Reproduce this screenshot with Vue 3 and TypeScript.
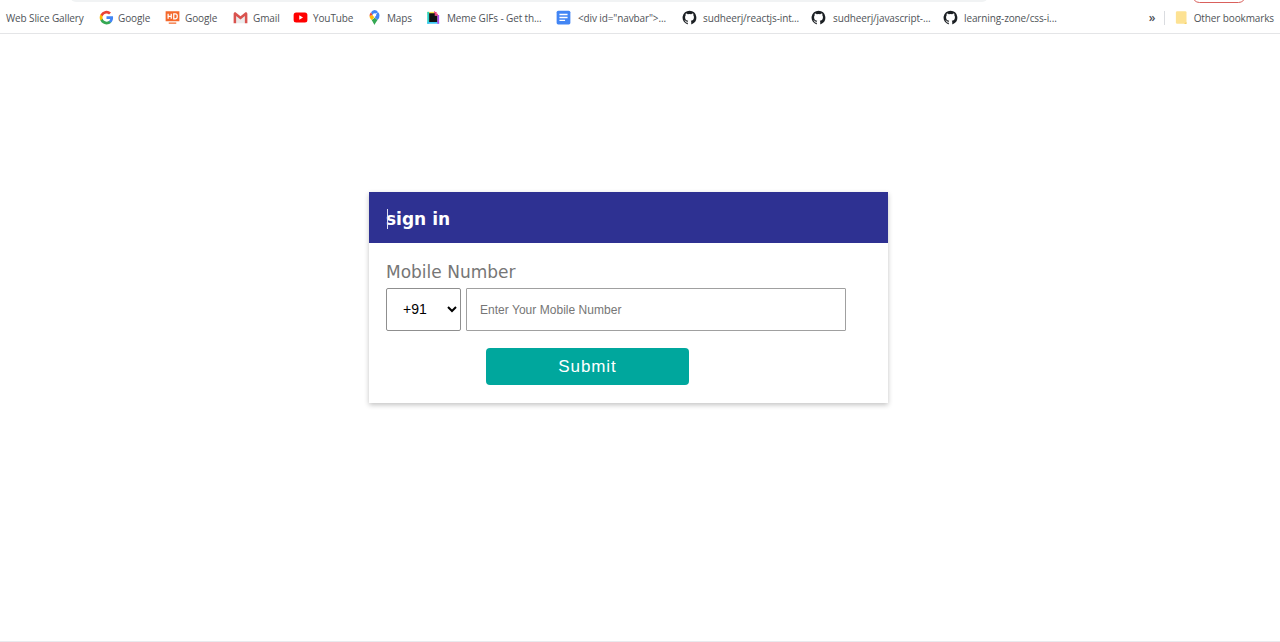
<template>
  <div class="page">
    <div class="top-strip">
      <div class="omnibox"></div>
      <div class="profile-pill"></div>
    </div>
    <nav class="bookmarks">
      <div class="bookmark-list">
        <a
          v-for="item in bookmarks"
          :key="item.label + item.width"
          class="bookmark"
          :style="{ width: item.width + 'px', gap: item.gap + 'px' }"
        >
          <svg v-if="item.icon" class="bm-icon" viewBox="0 0 24 24">
            <template v-if="item.icon === 'google'">
              <path fill="#4285f4" d="M22.5 12.2c0-.8-.1-1.500-.2-2.200H12v4.200h5.900a5 5 0 0 1-2.200 3.300v2.700h3.500c2.100-1.900 3.300-4.700 3.300-8z" />
              <path fill="#34a853" d="M12 23c3 0 5.400-1 7.200-2.700l-3.500-2.700c-1 .7-2.200 1-3.700 1-2.800 0-5.200-1.900-6.100-4.500H2.300v2.800A11 11 0 0 0 12 23z" />
              <path fill="#fbbc05" d="M5.900 14.100a6.600 6.600 0 0 1 0-4.200V7.100H2.300a11 11 0 0 0 0 9.800z" />
              <path fill="#ea4335" d="M12 5.400c1.600 0 3 .5 4.100 1.600l3.100-3.100A11 11 0 0 0 2.300 7.100l3.600 2.800C6.800 7.300 9.200 5.400 12 5.400z" />
            </template>
            <template v-else-if="item.icon === 'hd'">
              <path fill="#f4692c" d="M1 2h22v16H1zM6 20h12v2H6z" />
              <path fill="none" stroke="#fff" stroke-width="2" d="M5 6v8M5 10h5M10 6v8M14 6v8h2.500a3 3 0 0 0 3-3V9a3 3 0 0 0-3-3z" />
            </template>
            <template v-else-if="item.icon === 'gmail'">
              <path fill="#ececec" d="M4 5l8 7 8-7v16H4z" />
              <path fill="#d9534f" d="M1 6.500C1 4 3.500 3 5 4.500l7 5.500 7-5.500C20.500 3 23 4 23 6.500V21h-4V9.500l-7 5.500-7-5.500V21H1z" />
            </template>
            <template v-else-if="item.icon === 'youtube'">
              <rect x="1" y="4" width="22" height="16" rx="4" fill="#f00" />
              <path fill="#fff" d="M10 8.500v7l6-3.500z" />
            </template>
            <template v-else-if="item.icon === 'maps'">
              <path fill="#34a853" d="M7.500 16l4.500 8c1-3 3.200-5 4.800-8l-4.300-3.500z" />
              <path fill="#fbbc05" d="M4 9.500c0 2.800 1.800 4.600 3.500 6.500l4.500-5-3-3z" />
              <path fill="#ea4335" d="M6.500 3.500A8 8 0 0 0 4 9.500l5-1.500z" />
              <path fill="#4285f4" d="M12 0a8 8 0 0 0-5.500 3.500L9 8l7.500-3.500 1-1.500A8 8 0 0 0 12 0z" />
              <path fill="#4285f4" d="M20 8.500a8.500 8.500 0 0 1-3.200 7.500L12 11l4.500-6.500 1-1.500A8 8 0 0 1 20 8.500z" />
              <circle cx="12" cy="8" r="2.800" fill="#fff" />
            </template>
            <template v-else-if="item.icon === 'meme'">
              <path fill="#f7e24b" d="M2 3h11v4H2z" />
              <path fill="#2bd4c8" d="M2 3h3v19H2z" />
              <path fill="#3cc8f4" d="M2 19h19v3H2z" />
              <path fill="#b44cf0" d="M18 8h3v14h-3z" />
              <path fill="#f0437c" d="M13 1l2 2h2v3h2v3h-6z" />
              <path fill="#111" d="M5 5h9v4h4v10H5z" />
            </template>
            <template v-else-if="item.icon === 'docs'">
              <rect x="1" y="1" width="22" height="22" rx="2.500" fill="#4285f4" />
              <path fill="#fff" d="M5.500 6h13v2.200h-13zM5.500 10.800h13V13h-13zM5.500 15.500h9v2.200h-9z" />
            </template>
            <path
              v-else-if="item.icon === 'github'"
              fill="#1b1f23"
              d="M12 1A11.200 11.200 0 0 0 8.500 22.800c.6.100.8-.2.800-.5v-2.100c-3.100.7-3.800-1.300-3.800-1.300-.5-1.300-1.200-1.700-1.200-1.700-1-.7.100-.7.100-.7 1.100.1 1.700 1.200 1.700 1.200 1 1.700 2.600 1.200 3.200.9.100-.7.400-1.200.7-1.500-2.500-.3-5.100-1.200-5.100-5.500 0-1.200.4-2.200 1.100-3-.1-.3-.5-1.400.1-3 0 0 .9-.3 3.100 1.100a10.600 10.600 0 0 1 5.600 0c2.100-1.400 3.100-1.100 3.100-1.100.6 1.600.2 2.700.1 3 .7.800 1.100 1.800 1.100 3 0 4.300-2.600 5.200-5.100 5.500.4.400.8 1 .8 2.100v3c0 .3.200.6.800.5A11.200 11.200 0 0 0 12 1z"
            />
          </svg>
          <span class="bm-text">{{ item.label }}</span>
        </a>
      </div>
      <div class="bookmark-end">
        <span class="chevrons">»</span>
        <span class="divider"></span>
        <svg class="bm-icon folder" viewBox="0 0 24 24">
          <path fill="#fde293" d="M3 4a2 2 0 0 1 2-2h13a2 2 0 0 1 2 2v18H5a2 2 0 0 1-2-2z" />
          <path fill="#f2c94f" d="M16 22l4-2.500V22z" />
        </svg>
        <span class="bm-text">Other bookmarks</span>
      </div>
    </nav>

    <main class="content">
      <section class="card">
        <header class="card-head">
          <span class="caret"></span>
          <h1 class="card-title">sign in</h1>
        </header>
        <form class="card-body" @submit.prevent>
          <label class="field-label" for="mobile">Mobile Number</label>
          <div class="field-row">
            <select class="code-select">
              <option>+91</option>
            </select>
            <input id="mobile" class="mobile-input" type="text" placeholder="Enter Your Mobile Number" />
          </div>
          <button class="submit-btn" type="submit">Submit</button>
        </form>
      </section>
    </main>
  </div>
</template>

<script setup lang="ts">
interface Bookmark {
  label: string;
  icon: string;
  width: number;
  gap: number;
}

const bookmarks: Bookmark[] = [
  { label: 'Web Slice Gallery', icon: '', width: 93, gap: 0 },
  { label: 'Google', icon: 'google', width: 66, gap: 4 },
  { label: 'Google', icon: 'hd', width: 68, gap: 5 },
  { label: 'Gmail', icon: 'gmail', width: 60, gap: 5 },
  { label: 'YouTube', icon: 'youtube', width: 74, gap: 5 },
  { label: 'Maps', icon: 'maps', width: 59, gap: 5 },
  { label: 'Meme GIFs - Get th...', icon: 'meme', width: 130, gap: 6 },
  { label: '<div id="navbar">...', icon: 'docs', width: 126, gap: 7 },
  { label: 'sudheerj/reactjs-int...', icon: 'github', width: 129, gap: 6 },
  { label: 'sudheerj/javascript-...', icon: 'github', width: 132, gap: 7 },
  { label: 'learning-zone/css-i...', icon: 'github', width: 125, gap: 6 },
];
</script>

<style>
html,
body {
  margin: 0;
  background: #fff;
}
</style>

<style scoped>
.page {
  position: relative;
  height: 642px;
  overflow: hidden;
  box-sizing: border-box;
  background: #fff;
  border-bottom: 1px solid #e9eaee;
}

.top-strip {
  position: absolute;
  inset: 0 0 auto;
  height: 3px;
}

.omnibox {
  position: absolute;
  left: 70px;
  top: -10px;
  width: 918px;
  height: 12px;
  border-radius: 8px;
  background: #f1f3f4;
}

.profile-pill {
  position: absolute;
  left: 1192px;
  top: -12px;
  width: 52px;
  height: 13px;
  border: 1px solid #d9605c;
  border-radius: 8px;
}

.bookmarks {
  display: flex;
  justify-content: space-between;
  align-items: center;
  box-sizing: border-box;
  height: 34px;
  padding: 2px 6px 0;
  border-bottom: 1px solid #e4e5e7;
  font-family: "Open Sans", "Noto Sans", sans-serif;
  font-size: 10px;
  letter-spacing: -0.12px;
  color: #4f5358;
}

.bookmark-list,
.bookmark-end {
  display: flex;
  align-items: center;
}

.bookmark {
  display: flex;
  align-items: center;
  white-space: nowrap;
}

.bm-icon {
  flex: none;
  width: 15px;
  height: 15px;
}

.chevrons {
  width: 15px;
  font-size: 12px;
  font-weight: 600;
}

.divider {
  width: 1px;
  height: 14px;
  margin-right: 9px;
  background: #dadce0;
}

.folder {
  margin-right: 5px;
}

.content {
  padding: 158px 0 0 369px;
}

.card {
  width: 519px;
  background: #fff;
  box-shadow: 0 2px 5px rgba(0, 0, 0, 0.24);
}

.card-head {
  position: relative;
  display: flex;
  align-items: center;
  height: 51px;
  padding: 3px 0 0 17px;
  box-sizing: border-box;
  background: #2e3192;
}

.card-title {
  margin: 0;
  color: #fff;
  font-family: "DejaVu Sans", Verdana, sans-serif;
  font-size: 17px;
  font-weight: 700;
}

.caret {
  position: absolute;
  left: 18px;
  top: 17px;
  width: 1px;
  height: 20px;
  background: #dfe0f2;
}

.card-body {
  display: flex;
  flex-direction: column;
  padding: 18px 17px 18px;
}

.field-label {
  color: #767676;
  font-family: "DejaVu Sans", Verdana, sans-serif;
  font-size: 17px;
  line-height: 22px;
}

.field-row {
  display: flex;
  align-items: flex-end;
  gap: 5px;
  margin-top: 5px;
}

.code-select {
  box-sizing: border-box;
  width: 75px;
  height: 43px;
  padding: 0 0 2px 12px;
  border: 1px solid #8f8f8f;
  border-radius: 2px;
  background: #fff;
  color: #000;
  font-family: "Liberation Sans", Arial, sans-serif;
  font-size: 14px;
}

.mobile-input {
  box-sizing: border-box;
  width: 380px;
  height: 43px;
  padding: 0 13px;
  border: 1px solid #a0a0a0;
  border-radius: 1px;
  outline: none;
  font-family: "Liberation Sans", Arial, sans-serif;
  font-size: 12px;
  letter-spacing: 0.03px;
}

.mobile-input::placeholder {
  color: #767676;
  opacity: 1;
}

.submit-btn {
  align-self: flex-start;
  width: 203px;
  height: 37px;
  margin: 17px 0 0 100px;
  border: none;
  border-radius: 4px;
  background: #00a79d;
  color: #fff;
  font-family: "Liberation Sans", Arial, sans-serif;
  font-size: 17px;
  letter-spacing: 0.9px;
}
</style>
